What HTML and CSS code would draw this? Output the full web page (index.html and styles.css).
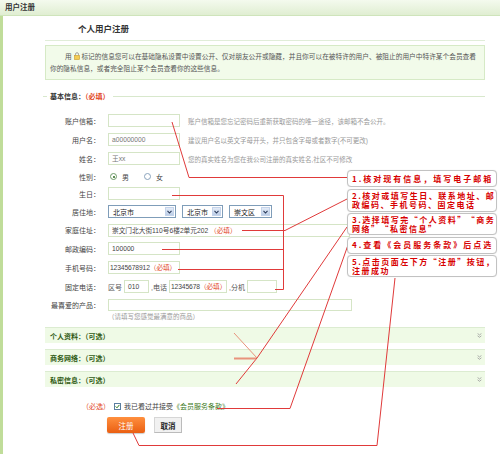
FILE: index.html
```html
<!DOCTYPE html>
<html lang="zh-CN">
<head>
    <meta charset="UTF-8">
    <title>用户注册</title>
    <link rel="stylesheet" href="styles.css">
</head>
<body>
    <div class="topbar">用户注册</div>

    <div class="page">
        <h1 class="title">个人用户注册</h1>

        <div class="notice">
            <p>用 <svg class="lock" width="6" height="8" viewBox="0 0 6 8"><path d="M1.5 3.5V2.2a1.5 1.5 0 0 1 3 0v1.3" fill="none" stroke="#999" stroke-width="0.9"/><rect x="0.5" y="3.5" width="5" height="4" fill="#f3cd55" stroke="#c89a2a" stroke-width="0.6"/></svg> 标记的信息您可以在基础隐私设置中设置公开、仅对朋友公开或隐藏，并且你可以在被特许的用户、被阻止的用户中特许某个会员查看<br>你的隐私信息，或者完全阻止某个会员查看你的这些信息。</p>
        </div>

        <div class="legend"><span class="legend-text">基本信息：<em class="req">（必填）</em></span></div>

        <div class="form">
            <div class="row r19">
                <label class="label">账户信箱：</label>
                <div class="field"></div>
                <span class="hint">账户信箱是您忘记密码后重新获取密码的唯一途径，该邮箱不会公开。</span>
            </div>
            <div class="row r19">
                <label class="label">用户名：</label>
                <div class="field muted">a00000000</div>
                <span class="hint">建议用户名以英文字母开头，并只包含字母或者数字(不可更改)</span>
            </div>
            <div class="row r19">
                <label class="label">姓名：</label>
                <div class="field muted">王xx</div>
                <span class="hint">您的真实姓名为您在我公司注册的真实姓名,社区不可修改</span>
            </div>
            <div class="row r17">
                <label class="label">性别：</label>
                <span class="radio checked"></span><span class="radio-text">男</span>
                <span class="radio"></span><span class="radio-text">女</span>
            </div>
            <div class="row r17">
                <label class="label">生日：</label>
                <div class="field"></div>
            </div>
            <div class="row r19">
                <label class="label">居住地：</label>
                <div class="select w68">北京市<span class="arrow"><svg width="5" height="4" viewBox="0 0 5 4"><path d="M0.5 0.8L2.5 3L4.5 0.8" fill="none" stroke="#2a3a5a" stroke-width="1.1"/></svg></span></div>
                <div class="select w41">北京市<span class="arrow"><svg width="5" height="4" viewBox="0 0 5 4"><path d="M0.5 0.8L2.5 3L4.5 0.8" fill="none" stroke="#2a3a5a" stroke-width="1.1"/></svg></span></div>
                <div class="select w43">崇文区<span class="arrow"><svg width="5" height="4" viewBox="0 0 5 4"><path d="M0.5 0.8L2.5 3L4.5 0.8" fill="none" stroke="#2a3a5a" stroke-width="1.1"/></svg></span></div>
            </div>
            <div class="row r18">
                <label class="label">家庭住址：</label>
                <div class="field wide">崇文门北大街110号6楼2单元202 <em class="req">（必填）</em></div>
            </div>
            <div class="row r19">
                <label class="label">邮政编码：</label>
                <div class="field">100000</div>
            </div>
            <div class="row r19">
                <label class="label">手机号码：</label>
                <div class="field tight">12345678912<em class="req">（必填）</em></div>
            </div>
            <div class="row r19">
                <label class="label">固定电话：</label>
                <span class="unit">区号</span>
                <div class="field w25">010</div>
                <span class="unit">,电话</span>
                <div class="field w58 tight">12345678<em class="req">（必填）</em></div>
                <span class="unit">,分机</span>
                <div class="field w30"></div>
            </div>
            <div class="row r18">
                <label class="label">最喜爱的产品：</label>
                <div class="field w244"></div>
            </div>
        </div>
        <div class="under-hint">（请填写您感觉最满意的商品）</div>

        <div class="sections">
            <div class="section">个人资料：（可选）<svg width="5" height="5" viewBox="0 0 5 5"><path d="M0.6 0.5L2.5 2L4.4 0.5M0.6 2.8L2.5 4.3L4.4 2.8" fill="none" stroke="#999" stroke-width="0.8"/></svg></div>
            <div class="section">商务网络：（可选）<svg width="5" height="5" viewBox="0 0 5 5"><path d="M0.6 0.5L2.5 2L4.4 0.5M0.6 2.8L2.5 4.3L4.4 2.8" fill="none" stroke="#999" stroke-width="0.8"/></svg></div>
            <div class="section">私密信息：（可选）<svg width="5" height="5" viewBox="0 0 5 5"><path d="M0.6 0.5L2.5 2L4.4 0.5M0.6 2.8L2.5 4.3L4.4 2.8" fill="none" stroke="#999" stroke-width="0.8"/></svg></div>
        </div>

        <div class="agree">
            <em class="req">（必选）</em>
            <span class="checkbox"><svg width="5" height="5" viewBox="0 0 5 5"><path d="M0.6 2.4L2 3.8L4.4 0.9" fill="none" stroke="#2f7a1e" stroke-width="1"/></svg></span>
            <span>我已看过并接受</span><a class="terms">《会员服务条款》</a>
        </div>

        <div class="buttons">
            <button class="btn btn-submit">注册</button>
            <button class="btn btn-cancel">取消</button>
        </div>
    </div>

    <!-- 标注线 -->
    <svg class="marks" width="500" height="454" viewBox="0 0 500 454">
        <g fill="none" stroke="#e03a3a" stroke-width="1">
            <polyline points="172,122 189,177.5 347,177.5"/>
            <line x1="172" y1="195.5" x2="283.5" y2="195.5"/>
            <line x1="283.5" y1="195.5" x2="283.5" y2="289.5"/>
            <polyline points="242,230.5 285,230.5 347,199"/>
            <line x1="162" y1="249.5" x2="283.5" y2="249.5"/>
            <line x1="178" y1="269.5" x2="283.5" y2="269.5"/>
            <line x1="275" y1="289.5" x2="283.5" y2="289.5"/>
            <line x1="347" y1="227" x2="257" y2="358"/>
            <line x1="257" y1="358" x2="236" y2="384"/>
            <polyline points="348,245 290,408.5 217,408.5"/>
            <polyline points="395,278 377,445.5 139,445.5 133,433"/>
        </g>
        <g fill="none" stroke="#e8937c">
            <line x1="234" y1="333" x2="257" y2="358" stroke-width="1"/>
            <line x1="234" y1="358.5" x2="256" y2="358.5" stroke-width="2"/>
        </g>
    </svg>

    <div class="callouts">
        <div class="tip h17 wide-gap">1.核对现有信息，填写电子邮箱</div>
        <div class="tip h23">2.核对或填写生日、联系地址、邮<br>政编码、手机号码、固定电话</div>
        <div class="tip h22">3.选择填写完“个人资料”“商务<br>网络”“私密信息”</div>
        <div class="tip h17 wide-gap">4.查看《会员服务条款》后点选</div>
        <div class="tip h22">5.点击页面左下方“注册”按钮，<br>注册成功</div>
    </div>
</body>
</html>
```

FILE: styles.css
```css
* {
    margin: 0;
    padding: 0;
    box-sizing: border-box;
}

body {
    width: 500px;
    height: 454px;
    overflow: hidden;
    position: relative;
    background: #fff;
    font-family: "Liberation Sans", "Noto Sans CJK SC", sans-serif;
    font-size: 7px;
    color: #444;
}

em {
    font-style: normal;
}

.req {
    color: #e2461e;
}

.topbar {
    height: 16px;
    line-height: 15px;
    padding-left: 5px;
    font-size: 7.5px;
    font-weight: bold;
    color: #333;
    background: linear-gradient(#f4faee, #e0eed2);
    border-bottom: 1px solid #cfe4bb;
}

.page {
    width: 485px;
    height: 438px;
    border-left: 3px solid #c0dd9a;
    padding-left: 42px;
}

.title {
    height: 25px;
    padding: 2px 0 0 33px;
    line-height: 22px;
    font-size: 8.5px;
    font-weight: bold;
    color: #333;
    border-bottom: 1px solid #e0edd8;
}

.notice {
    margin-top: 4px;
    height: 35px;
    padding: 5px 4px 0;
    background: #f2fbea;
    border: 1px solid #d6eac6;
    line-height: 12px;
    font-size: 6.7px;
    color: #555;
    text-indent: 15px;
}

.notice p {
    white-space: nowrap;
}

.lock {
    vertical-align: -1px;
}

.legend {
    margin-top: 9px;
    height: 14px;
    display: flex;
    align-items: center;
}

.legend::before {
    content: '';
    width: 4px;
    margin-left: -2px;
    margin-right: 3px;
    border-top: 1px solid #d8e8cc;
}

.legend::after {
    content: '';
    flex: 1;
    margin-left: 3px;
    border-top: 1px solid #d8e8cc;
}

.legend-text {
    font-weight: bold;
    color: #333;
}

.form {
    margin-top: 8px;
}

.row {
    display: flex;
    align-items: center;
    white-space: nowrap;
}

.r17 { height: 17px; }
.r18 { height: 18px; }
.r19 { height: 19px; }

.label {
    width: 55px;
    margin-right: 8px;
    text-align: right;
    color: #444;
}

.field {
    width: 72px;
    height: 13px;
    padding: 0 3px;
    line-height: 11px;
    border: 1px solid #d5e5c6;
    background: #fff;
    font-size: 6.7px;
    color: #444;
    overflow: hidden;
}

.field.muted { color: #777; }
.field.tight { padding: 0 1px; letter-spacing: -0.1px; }
.field.wide { width: 242px; }
.field.w25 { width: 25px; }
.field.w30 { width: 30px; }
.field.w58 { width: 58px; }
.field.w244 { width: 244px; height: 12px; }

.hint {
    margin-left: 8px;
    font-size: 6.5px;
    color: #999;
}

.unit {
    margin: 0 2px;
    color: #555;
}

.row .unit:first-of-type {
    margin-left: 0;
}

.radio {
    width: 7px;
    height: 7px;
    margin-left: 2px;
    border: 1px solid #8aa3bd;
    border-radius: 50%;
    background: #fff;
    position: relative;
}

.radio.checked {
    border-color: #6f9a6a;
}

.radio.checked::after {
    content: '';
    position: absolute;
    left: 1.5px;
    top: 1.5px;
    width: 2px;
    height: 2px;
    border-radius: 50%;
    background: #2a6a1a;
}

.radio-text {
    margin-left: 5px;
    margin-right: 13px;
}

.select {
    height: 13px;
    margin-right: 6px;
    padding: 1px 1px 1px 4px;
    display: flex;
    align-items: center;
    justify-content: space-between;
    border: 1px solid #7f9db9;
    background: #fff;
    color: #222;
}

.select.w68 { width: 68px; }
.select.w41 { width: 41px; }
.select.w43 { width: 43px; }

.select .arrow {
    width: 9px;
    height: 100%;
    display: flex;
    align-items: center;
    justify-content: center;
    background: linear-gradient(#e4ecf8, #bccde6);
    border: 1px solid #c4d3ea;
}

.under-hint {
    margin-top: -1px;
    padding-left: 63px;
    line-height: 8px;
    font-size: 6.5px;
    color: #999;
}

.sections {
    margin-top: 6px;
    display: flex;
    flex-direction: column;
    gap: 6px;
}

.section {
    height: 16px;
    padding: 0 3px 0 5px;
    display: flex;
    align-items: center;
    justify-content: space-between;
    background: #effae6;
    border-top: 1px solid #dcecd1;
    font-weight: bold;
    color: #2f5b14;
}

.agree {
    margin-top: 13px;
    height: 12px;
    padding-left: 37px;
    display: flex;
    align-items: center;
    white-space: nowrap;
    color: #444;
}

.checkbox {
    width: 7px;
    height: 7px;
    margin: 0 3px 0 4px;
    display: flex;
    align-items: center;
    justify-content: center;
    border: 1px solid #5a7ea0;
    background: #fff;
}

.terms {
    color: #3c7a1c;
}

.buttons {
    margin-top: 5px;
    padding-left: 62px;
    display: flex;
    gap: 9px;
}

.btn {
    height: 16px;
    border: none;
    font-family: "Liberation Sans", "Noto Sans CJK SC", sans-serif;
    font-size: 7.5px;
    cursor: pointer;
}

.btn-submit {
    width: 38px;
    border-radius: 2px;
    color: #fff;
    background: linear-gradient(#ff8f3e, #ea5f12);
    box-shadow: 0 1px 1px rgba(0, 0, 0, 0.2);
}

.btn-cancel {
    width: 28px;
    color: #222;
    font-weight: bold;
    background: #f1f1f1;
    border: 1px solid #d6d6d6;
    border-right-color: #bbb;
    border-bottom-color: #bbb;
}

/* 标注 */
.marks {
    position: absolute;
    top: 0;
    left: 0;
    pointer-events: none;
}

.callouts {
    position: absolute;
    top: 170px;
    left: 347px;
    width: 150px;
    display: flex;
    flex-direction: column;
    gap: 1.5px;
}

.tip {
    padding: 0 1px 0 4px;
    display: flex;
    flex-direction: column;
    justify-content: center;
    border: 1px solid #c2c2c2;
    border-radius: 4px;
    background: #fff;
    box-shadow: 0 0 1px rgba(0, 0, 0, 0.15);
    font-family: "Noto Sans CJK SC", sans-serif;
    font-size: 8px;
    font-weight: bold;
    line-height: 9.5px;
    letter-spacing: 1.5px;
    color: #d80000;
    white-space: nowrap;
}

.tip.wide-gap { letter-spacing: 2px; }

.h17 { height: 17px; }
.h22 { height: 22px; }
.h23 { height: 23px; }
```
